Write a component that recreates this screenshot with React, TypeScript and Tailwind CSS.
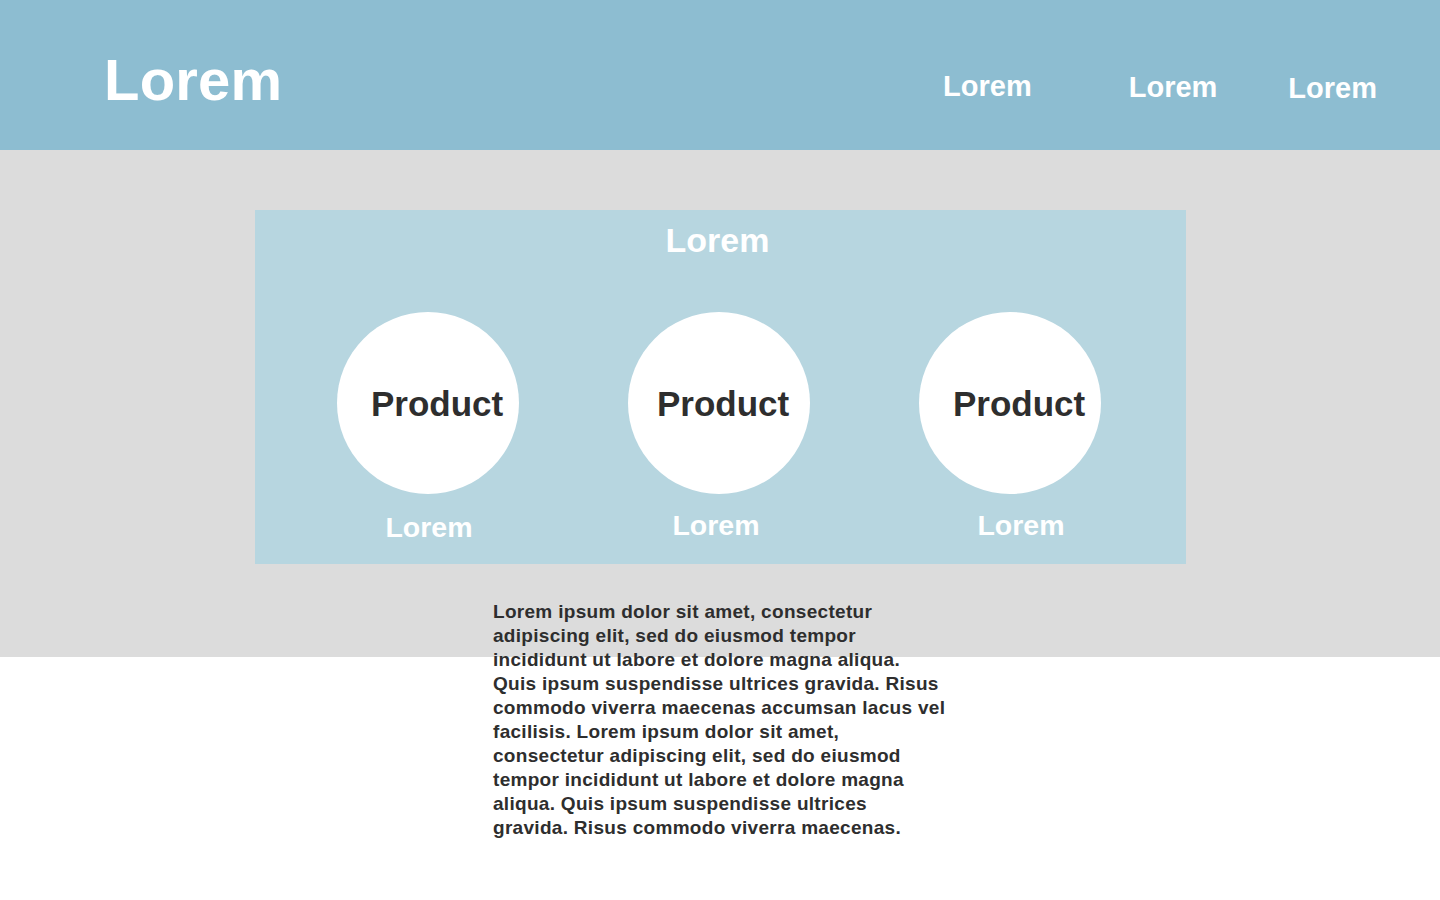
export default function App() {
  const font = { fontFamily: '"Liberation Sans", Arial, sans-serif' };
  const products = [
    { tx: 'pl-[34px]', lb: 'mt-[19px] ml-[2px]' },
    { tx: 'pl-[29px]', lb: 'mt-[17px] -ml-[6px]' },
    { tx: 'pl-[34px]', lb: 'mt-[17px] ml-[22px]' },
  ];
  const lines = [
    'Lorem ipsum dolor sit amet, consectetur',
    'adipiscing elit, sed do eiusmod tempor',
    'incididunt ut labore et dolore magna aliqua.',
    'Quis ipsum suspendisse ultrices gravida. Risus',
    'commodo viverra maecenas accumsan lacus vel',
    'facilisis. Lorem ipsum dolor sit amet,',
    'consectetur adipiscing elit, sed do eiusmod',
    'tempor incididunt ut labore et dolore magna',
    'aliqua. Quis ipsum suspendisse ultrices',
    'gravida. Risus commodo viverra maecenas.',
  ];
  return (
    <div className="w-[1440px] min-h-[900px] bg-white" style={font}>
      <header className="h-[150px] bg-[#8dbdd1] flex items-center pl-[104px] pr-[63px]">
        <div className="text-[58px] font-bold text-white leading-none mt-[10px] tracking-[0.2px]">Lorem</div>
        <nav className="ml-auto mt-[30px] flex items-center text-[29px] font-bold text-white leading-none">
          <span className="-mt-[8px]">Lorem</span>
          <span className="ml-[97px] -mt-[6px]">Lorem</span>
          <span className="ml-[71px] -mt-[4px]">Lorem</span>
        </nav>
      </header>
      <section className="h-[507px] bg-[#dcdcdc] pt-[60px]">
        <div className="ml-[255px] w-[931px] h-[354px] bg-[#b7d6e0] flex flex-col items-center">
          <div className="mt-[13px] text-[34px] font-bold text-white leading-[34px] -ml-[6px]">Lorem</div>
          <div className="mt-[55px] flex gap-[109px] -ml-[3px]">
            {products.map((p, i) => (
              <div key={i} className="flex flex-col items-center w-[182px]">
                <div className={`w-[182px] h-[182px] rounded-full bg-white flex items-center ${p.tx}`}>
                  <span className="text-[35px] font-bold text-[#2e2e2e] leading-none">Product</span>
                </div>
                <span className={`${p.lb} text-[28.5px] font-bold text-white leading-[28px]`}>Lorem</span>
              </div>
            ))}
          </div>
        </div>
        <p className="ml-[493px] mt-[36px] w-[480px] text-[19px] font-bold leading-[24px] text-[#2e2e2e] tracking-[0.3px]">
          {lines.map((l, i) => (
            <span key={i} className="block whitespace-nowrap">{l}</span>
          ))}
        </p>
      </section>
    </div>
  );
}
